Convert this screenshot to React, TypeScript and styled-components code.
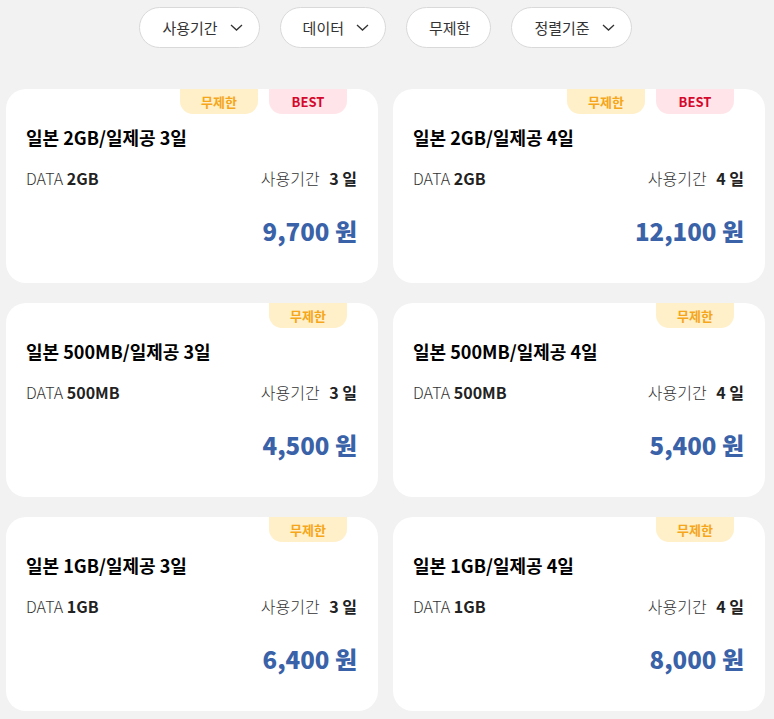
import React from 'react';
import styled, { createGlobalStyle } from 'styled-components';

const GlobalStyle = createGlobalStyle`
  html, body {
    margin: 0;
    padding: 0;
    background: #f2f2f2;
    font-family: "Noto Sans CJK KR", "Noto Sans", sans-serif;
    color: #222;
  }
  * {
    box-sizing: border-box;
  }
`;

const Page = styled.div`
  padding: 7px 9px 10px 6px;
`;

const FilterBar = styled.div`
  display: flex;
  justify-content: center;
  gap: 20px;
  margin-bottom: 41px;
`;

const FilterPill = styled.button<{ $hasArrow?: boolean }>`
  height: 41px;
  display: flex;
  align-items: center;
  gap: 12px;
  padding: 0 ${props => (props.$hasArrow ? '16px' : '20px')} 0 22px;
  background: #fff;
  border: 1px solid #d9d9d9;
  border-radius: 21px;
  font-family: inherit;
  font-size: 15px;
  color: #333;
  cursor: pointer;
`;

const Chevron = styled.svg`
  width: 13px;
  height: 7px;
`;

const CardGrid = styled.div`
  display: grid;
  grid-template-columns: 1fr 1fr;
  column-gap: 15px;
  row-gap: 20px;
`;

const Card = styled.div`
  background: #fff;
  border-radius: 20px;
  padding: 0 21px 36px 20px;
`;

const BadgeRow = styled.div`
  display: flex;
  justify-content: flex-end;
  gap: 11px;
  height: 25px;
  margin-right: 10px;
`;

const Badge = styled.span<{ $kind: 'unlimited' | 'best' }>`
  width: 78px;
  height: 25px;
  display: flex;
  align-items: center;
  justify-content: center;
  border-radius: 0 0 13px 13px;
  font-size: 13px;
  font-weight: 700;
  background: ${props => (props.$kind === 'best' ? '#ffe5e9' : '#fff0c9')};
  color: ${props => (props.$kind === 'best' ? '#d4082c' : '#f5a61a')};
`;

const Title = styled.h3`
  margin: 11px 0 0;
  font-size: 18px;
  line-height: 24px;
  font-weight: 700;
  color: #000;
`;

const InfoRow = styled.div`
  display: flex;
  justify-content: space-between;
  margin-top: 18px;
  font-size: 16px;
  line-height: 22px;
  font-weight: 300;
  color: #333;

  b {
    font-weight: 700;
    color: #222;
  }
`;

const Period = styled.span`
  b {
    margin-left: 6px;
  }
`;

const Price = styled.div`
  margin-top: 26px;
  text-align: right;
  font-size: 24px;
  line-height: 32px;
  font-weight: 900;
  color: #3a62a8;
`;

const ArrowIcon = () => (
  <Chevron viewBox="0 0 13 7">
    <polyline points="1,1 6.5,6 12,1" fill="none" stroke="#333" strokeWidth="1.3" />
  </Chevron>
);

const filters = [
  { label: '사용기간', arrow: true },
  { label: '데이터', arrow: true },
  { label: '무제한', arrow: false },
  { label: '정렬기준', arrow: true },
];

const products = [
  { name: '일본 2GB/일제공 3일', data: '2GB', days: 3, price: '9,700', best: true },
  { name: '일본 2GB/일제공 4일', data: '2GB', days: 4, price: '12,100', best: true },
  { name: '일본 500MB/일제공 3일', data: '500MB', days: 3, price: '4,500', best: false },
  { name: '일본 500MB/일제공 4일', data: '500MB', days: 4, price: '5,400', best: false },
  { name: '일본 1GB/일제공 3일', data: '1GB', days: 3, price: '6,400', best: false },
  { name: '일본 1GB/일제공 4일', data: '1GB', days: 4, price: '8,000', best: false },
];

const App: React.FC = () => {
  return (
    <Page>
      <GlobalStyle />
      <FilterBar>
        {filters.map(f => (
          <FilterPill key={f.label} $hasArrow={f.arrow}>
            {f.label}
            {f.arrow && <ArrowIcon />}
          </FilterPill>
        ))}
      </FilterBar>

      <CardGrid>
        {products.map(p => (
          <Card key={p.name}>
            <BadgeRow>
              <Badge $kind="unlimited">무제한</Badge>
              {p.best && <Badge $kind="best">BEST</Badge>}
            </BadgeRow>
            <Title>{p.name}</Title>
            <InfoRow>
              <span>
                DATA <b>{p.data}</b>
              </span>
              <Period>
                사용기간 <b>{p.days} 일</b>
              </Period>
            </InfoRow>
            <Price>{p.price} 원</Price>
          </Card>
        ))}
      </CardGrid>
    </Page>
  );
};

export default App;
